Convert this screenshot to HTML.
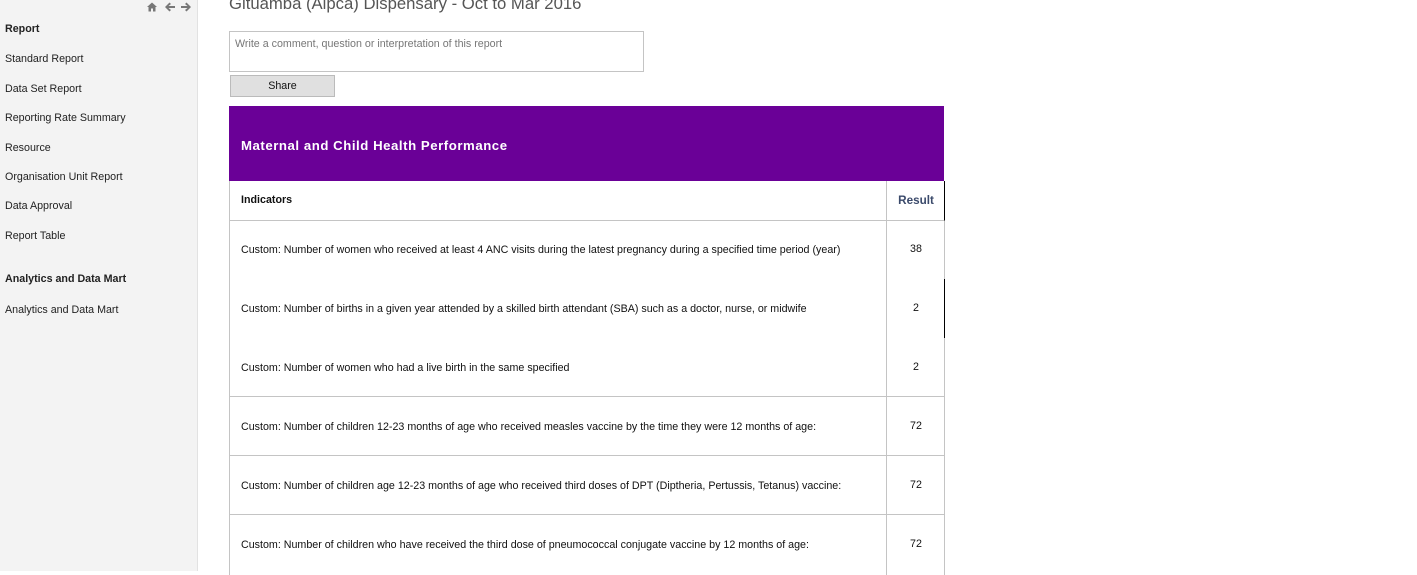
<html><head><style>
body{margin:0;width:1417px;height:571px;overflow:hidden;background:#fff;font-family:"Liberation Sans",sans-serif;position:relative}
#sb{position:absolute;left:0;top:0;width:197px;height:571px;background:#f3f3f3;border-right:1px solid #e2e2e2}
.it{position:absolute;left:5px;font-size:10.7px;color:#222}
.h{font-weight:bold}
#title{position:absolute;left:229px;top:-6px;font-size:16.7px;color:#555}
#cm{position:absolute;left:229px;top:31px;width:413px;height:39px;border:1px solid #c4c4c4;font-size:10.7px;color:#777}
#cm span{position:absolute;left:5px;top:6px}
#sh{position:absolute;left:230px;top:75px;width:103px;height:20px;background:#e0e0e0;border:1px solid #bbb;font-size:10.7px;text-align:center;line-height:20px;color:#111}
#ph{position:absolute;left:229px;top:106px;width:715px;height:75px;background:#6a0097;color:#fff;font-weight:bold;font-size:13.2px;letter-spacing:0.55px}
#ph span{position:absolute;left:12px;top:32px}
.r{position:absolute;left:229px;width:716px;box-sizing:border-box;border-left:1px solid #c4c4c4;border-right:1px solid #c4c4c4;font-size:10.7px;color:#111}
.r .a{position:absolute;left:11px}
.r .b{position:absolute;left:656px;width:58px;text-align:center;border-left:1px solid #c4c4c4;top:0;bottom:0}
</style></head><body>
<div id="sb">
<svg style="position:absolute;left:146px;top:1px" width="46" height="12" viewBox="0 0 46 12" fill="#777">
<path d="M1 6 L6 1.5 L11 6 L9.5 6 L9.5 10.5 L7 10.5 L7 7.5 L5 7.5 L5 10.5 L2.5 10.5 L2.5 6 Z"/>
<path d="M19 6 L23.5 1.5 L25 3 L22.5 5 L29 5 L29 7 L22.5 7 L25 9 L23.5 10.5 Z"/>
<path d="M45 6 L40.5 1.5 L39 3 L41.5 5 L35 5 L35 7 L41.5 7 L39 9 L40.5 10.5 Z"/>
</svg>
<div class="it h" style="top:23px">Report</div>
<div class="it" style="top:53px">Standard Report</div>
<div class="it" style="top:83px">Data Set Report</div>
<div class="it" style="top:112px">Reporting Rate Summary</div>
<div class="it" style="top:142px">Resource</div>
<div class="it" style="top:171px">Organisation Unit Report</div>
<div class="it" style="top:200px">Data Approval</div>
<div class="it" style="top:230px">Report Table</div>
<div class="it h" style="top:273px">Analytics and Data Mart</div>
<div class="it" style="top:304px">Analytics and Data Mart</div>
</div>
<div id="title">Gituamba (Aipca) Dispensary - Oct to Mar 2016</div>
<div id="cm"><span>Write a comment, question or interpretation of this report</span></div>
<div id="sh">Share</div>
<div id="ph"><span>Maternal and Child Health Performance</span></div>
<div class="r" style="top:181px;height:40px;border-bottom:1px solid #c4c4c4;border-right-color:#000"><span class="a" style="top:13px;font-weight:bold">Indicators</span><span class="b" style="line-height:39px;color:#3b4a6b;font-weight:bold;font-size:11.7px">Result</span></div>
<div class="r" style="top:221px;height:58px"><span class="a" style="top:23px">Custom: Number of women who received at least 4 ANC visits during the latest pregnancy during a specified time period (year)</span><span class="b" style="line-height:57px">38</span></div>
<div class="r" style="top:279px;height:59px;border-right-color:#000"><span class="a" style="top:24px">Custom: Number of births in a given year attended by a skilled birth attendant (SBA) such as a doctor, nurse, or midwife</span><span class="b" style="line-height:59px">2</span></div>
<div class="r" style="top:338px;height:59px;border-bottom:1px solid #c4c4c4"><span class="a" style="top:24px">Custom: Number of women who had a live birth in the same specified</span><span class="b" style="line-height:59px">2</span></div>
<div class="r" style="top:397px;height:59px;border-bottom:1px solid #c4c4c4"><span class="a" style="top:24px">Custom: Number of children 12-23 months of age who received measles vaccine by the time they were 12 months of age:</span><span class="b" style="line-height:59px">72</span></div>
<div class="r" style="top:456px;height:59px;border-bottom:1px solid #c4c4c4"><span class="a" style="top:24px">Custom: Number of children age 12-23 months of age who received third doses of DPT (Diptheria, Pertussis, Tetanus) vaccine:</span><span class="b" style="line-height:59px">72</span></div>
<div class="r" style="top:515px;height:60px"><span class="a" style="top:24px">Custom: Number of children who have received the third dose of pneumococcal conjugate vaccine by 12 months of age:</span><span class="b" style="line-height:59px">72</span></div>
</body></html>
